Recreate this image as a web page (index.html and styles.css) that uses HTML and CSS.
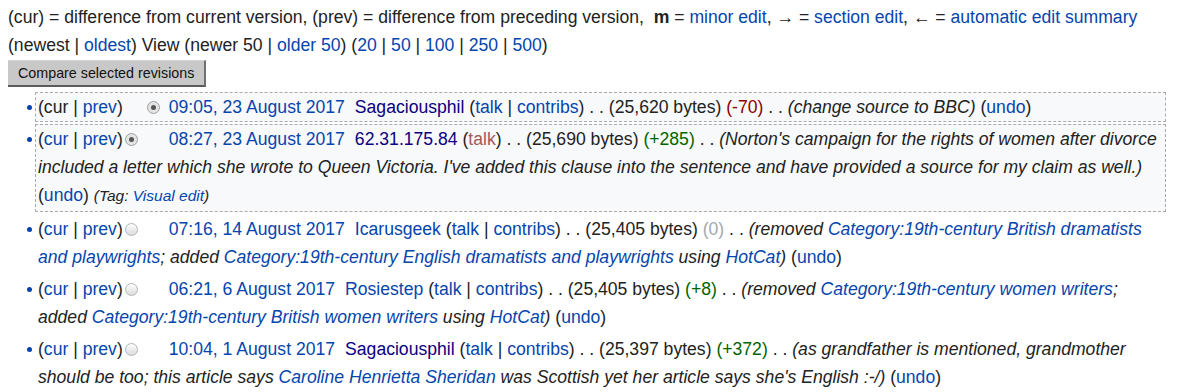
FILE: index.html
```html
<!DOCTYPE html>
<html>
<head>
<meta charset="utf-8">
<link rel="stylesheet" href="styles.css">
</head>
<body>
<div class="legend">(cur) = difference from current version, (prev) = difference from preceding version, &nbsp;<b>m</b> = <a href="#">minor edit</a>, <span class="arr">→</span> = <a href="#">section edit</a>, <span class="arr">←</span> = <a href="#">automatic edit summary</a></div>
<div class="nav">(newest | <a href="#">oldest</a>) View (newer 50 | <a href="#">older 50</a>) (<a href="#">20</a> | <a href="#">50</a> | <a href="#">100</a> | <a href="#">250</a> | <a href="#">500</a>)</div>
<div class="btnrow"><button class="cmp">Compare selected revisions</button></div>
<ul class="hist">
  <li class="sel">(cur | <a href="#">prev</a>)<span class="radio hidden"></span><span class="radio checked"></span><a class="date" href="#">09:05, 23 August 2017</a><span class="user"><a class="visited" href="#">Sagaciousphil</a> (<a href="#">talk</a> | <a href="#">contribs</a>)</span> . . (25,620 bytes) <span class="neg">(-70)</span> . . <i>(change source to BBC)</i> (<a href="#">undo</a>)</li>
  <li class="sel sel-last">(<a href="#">cur</a> | <a href="#">prev</a>)<span class="radio checked"></span><span class="radio hidden"></span><a class="date" href="#">08:27, 23 August 2017</a><span class="user"><a class="visited" href="#">62.31.175.84</a> (<a class="new" href="#">talk</a>)</span> . . (25,690 bytes) <span class="pos">(+285)</span> . . <i>(Norton's campaign for the rights of women after divorce included a letter which she wrote to Queen Victoria. I've added this clause into the sentence and have provided a source for my claim as well.)</i> (<a href="#">undo</a>) <span class="tag">(Tag: <a href="#">Visual edit</a>)</span></li>
  <li>(<a href="#">cur</a> | <a href="#">prev</a>)<span class="radio"></span><span class="radio hidden"></span><a class="date" href="#">07:16, 14 August 2017</a><span class="user"><a href="#">Icarusgeek</a> (<a href="#">talk</a> | <a href="#">contribs</a>)</span> . . (25,405 bytes) <span class="zero">(0)</span> . . <i>(removed <a href="#">Category:19th-century British dramatists and playwrights</a>; added <a href="#">Category:19th-century English dramatists and playwrights</a> using <a href="#">HotCat</a>)</i> (<a href="#">undo</a>)</li>
  <li>(<a href="#">cur</a> | <a href="#">prev</a>)<span class="radio"></span><span class="radio hidden"></span><a class="date" href="#">06:21, 6 August 2017</a><span class="user"><a href="#">Rosiestep</a> (<a href="#">talk</a> | <a href="#">contribs</a>)</span> . . (25,405 bytes) <span class="pos">(+8)</span> . . <i>(removed <a href="#">Category:19th-century women writers</a>; added <a href="#">Category:19th-century British women writers</a> using <a href="#">HotCat</a>)</i> (<a href="#">undo</a>)</li>
  <li>(<a href="#">cur</a> | <a href="#">prev</a>)<span class="radio"></span><span class="radio hidden"></span><a class="date" href="#">10:04, 1 August 2017</a><span class="user"><a class="visited" href="#">Sagaciousphil</a> (<a href="#">talk</a> | <a href="#">contribs</a>)</span> . . (25,397 bytes) <span class="pos">(+372)</span> . . <i>(as grandfather is mentioned, grandmother should be too; this article says <a href="#">Caroline Henrietta Sheridan</a> was Scottish yet her article says she's English :-/)</i> (<a href="#">undo</a>)</li>
</ul>
</body>
</html>
```
FILE: styles.css
```css
body {
  margin: 3px 8px 8px 8px;
  font-family: "Liberation Sans", Arial, sans-serif;
  font-size: 17.6px;
  color: #222;
  background: #fff;
}
a {
  color: #0645ad;
  text-decoration: none;
}
a.visited { color: #0b0080; }
a.new { color: #a55858; }
.legend, .nav {
  line-height: 28px;
}
.btnrow {
  display: flex;
  margin: 1px 0 0 -2px;
}
.cmp {
  box-sizing: border-box;
  font-family: "Liberation Sans", Arial, sans-serif;
  font-size: 14.3px;
  color: #111;
  background: #c8c8c8;
  border-style: solid;
  border-color: #d8d8d8 #707070 #5a5a5a #d8d8d8;
  border-width: 1px 2px 2px 1px;
  height: 27px;
  padding: 0 10px 0 11px;
}
.hist {
  list-style: none;
  margin: 5px 7px 0 0;
  padding: 0 0 0 27px;
}
.hist li {
  position: relative;
  line-height: 28px;
  border: 1px dashed transparent;
  margin-bottom: 2px;
  padding: 0 2px;
}
.hist li::before {
  content: "";
  position: absolute;
  left: -9px;
  top: 12px;
  width: 5px;
  height: 5px;
  border-radius: 50%;
  background: #0645ad;
}
.hist li.sel {
  border-color: #aaa;
  background: #f8f9fa;
  margin-bottom: 2px;
}
.hist li.sel-last {
  padding-bottom: 1px;
  margin-bottom: 2px;
}
.radio {
  display: inline-block;
  box-sizing: border-box;
  position: relative;
  width: 13px;
  height: 13px;
  border-radius: 50%;
  border: 1px solid #b5b5b5;
  background: linear-gradient(#fdfdfd, #dcdcdc);
  vertical-align: -1px;
  margin-left: 2px;
  margin-right: 7px;
}
.radio.hidden { visibility: hidden; }
.radio.checked {
  background: #e4e4e4;
  border-color: #a0a0a0;
}
.radio.checked::after {
  content: "";
  position: absolute;
  left: 3px;
  top: 3px;
  width: 5px;
  height: 5px;
  border-radius: 50%;
  background: #555;
}
.date { margin-left: 2px; }
.user { margin-left: 10px; }
.neg { color: #8b0000; }
.pos { color: #006400; }
.zero { color: #a2a9b1; }
.tag { font-size: 15.5px; font-style: italic; }
```
